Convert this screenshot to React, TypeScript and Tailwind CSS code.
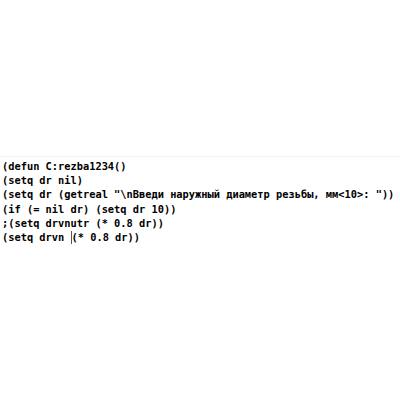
import React from "react";

export default function App() {
  const lines = [
    "(defun C:rezba1234()",
    "(setq dr nil)",
    '(setq dr (getreal "\\nВведи наружный диаметр резьбы, мм<10>: "))',
    "(if (= nil dr) (setq dr 10))",
    ";(setq drvnutr (* 0.8 dr))",
  ];
  return (
    <div className="w-[400px] h-[400px] bg-white overflow-hidden">
      <div className="h-[156px]" />
      <div className="h-px bg-[#f2f2f2]" />
      <div
        className="pt-[2px] pl-[2px] text-[10.35px] leading-[14.2px] font-bold text-black whitespace-pre"
        style={{ fontFamily: '"DejaVu Sans Mono", monospace' }}
      >
        {lines.map((l, i) => (
          <div key={i}>{l}</div>
        ))}
        <div className="flex items-center">
          <span>(setq drvn </span>
          <span className="inline-block w-px h-[13px] bg-[#555]" />
          <span>(* 0.8 dr))</span>
        </div>
      </div>
    </div>
  );
}
